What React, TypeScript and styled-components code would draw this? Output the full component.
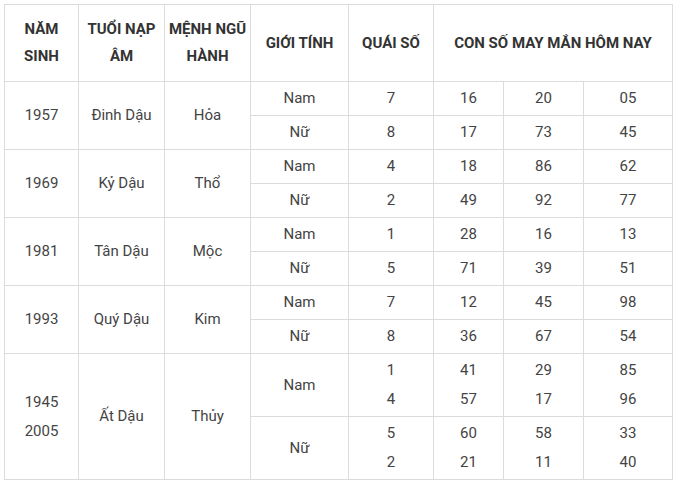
import React from "react";
import styled, { createGlobalStyle } from "styled-components";

const Global = createGlobalStyle`
  html, body { margin: 0; padding: 0; background: #fff; }
  body { font-family: Roboto, "Noto Sans", "Liberation Sans", sans-serif; }
`;

const Wrap = styled.div`
  padding: 4px 0 0 4px;
`;

const Table = styled.table`
  border-collapse: collapse;
  table-layout: fixed;
  width: 668px;
  font-size: 15px;
  color: #444;
`;

const Th = styled.th`
  border: 1px solid #dcdcdc;
  font-weight: 700;
  color: #333;
  line-height: 27px;
  height: 76px;
  padding: 0;
  white-space: nowrap;
  text-align: center;
  vertical-align: middle;
`;

const Td = styled.td<{ $h?: number }>`
  border: 1px solid #dcdcdc;
  text-align: center;
  vertical-align: middle;
  padding: 0;
  line-height: 29px;
  height: ${(p) => (p.$h ? `${p.$h}px` : "auto")};
`;

const Line = styled.div`
  line-height: 29px;
`;

type Sub = { g: string; q: string[]; n: string[][] };
type Group = { year: string[]; tuoi: string; menh: string; subs: Sub[]; h: number };

const data: Group[] = [
  { year: ["1957"], tuoi: "Đinh Dậu", menh: "Hỏa", h: 33, subs: [
    { g: "Nam", q: ["7"], n: [["16", "20", "05"]] },
    { g: "Nữ", q: ["8"], n: [["17", "73", "45"]] },
  ] },
  { year: ["1969"], tuoi: "Kỷ Dậu", menh: "Thổ", h: 33, subs: [
    { g: "Nam", q: ["4"], n: [["18", "86", "62"]] },
    { g: "Nữ", q: ["2"], n: [["49", "92", "77"]] },
  ] },
  { year: ["1981"], tuoi: "Tân Dậu", menh: "Mộc", h: 33, subs: [
    { g: "Nam", q: ["1"], n: [["28", "16", "13"]] },
    { g: "Nữ", q: ["5"], n: [["71", "39", "51"]] },
  ] },
  { year: ["1993"], tuoi: "Quý Dậu", menh: "Kim", h: 33, subs: [
    { g: "Nam", q: ["7"], n: [["12", "45", "98"]] },
    { g: "Nữ", q: ["8"], n: [["36", "67", "54"]] },
  ] },
  { year: ["1945", "2005"], tuoi: "Ất Dậu", menh: "Thủy", h: 62, subs: [
    { g: "Nam", q: ["1", "4"], n: [["41", "29", "85"], ["57", "17", "96"]] },
    { g: "Nữ", q: ["5", "2"], n: [["60", "58", "33"], ["21", "11", "40"]] },
  ] },
];

const widths = [74, 86, 86, 98, 85, 70, 80, 89];

const Lines = ({ items }: { items: string[] }) => (
  <>{items.map((t, i) => <Line key={i}>{t}</Line>)}</>
);

export default function App() {
  return (
    <>
      <Global />
      <Wrap>
        <Table>
          <colgroup>
            {widths.map((w, i) => <col key={i} style={{ width: w }} />)}
          </colgroup>
          <thead>
            <tr>
              <Th>NĂM<br />SINH</Th>
              <Th>TUỔI NẠP<br />ÂM</Th>
              <Th>MỆNH NGŨ<br />HÀNH</Th>
              <Th>GIỚI TÍNH</Th>
              <Th>QUÁI SỐ</Th>
              <Th colSpan={3}>CON SỐ MAY MẮN HÔM NAY</Th>
            </tr>
          </thead>
          <tbody>
            {data.map((g) =>
              g.subs.map((s, si) => (
                <tr key={g.year[0] + si}>
                  {si === 0 && (
                    <>
                      <Td rowSpan={2}><Lines items={g.year} /></Td>
                      <Td rowSpan={2}>{g.tuoi}</Td>
                      <Td rowSpan={2}>{g.menh}</Td>
                    </>
                  )}
                  <Td $h={g.h}>{s.g}</Td>
                  <Td><Lines items={s.q} /></Td>
                  {[0, 1, 2].map((c) => (
                    <Td key={c}><Lines items={s.n.map((r) => r[c])} /></Td>
                  ))}
                </tr>
              ))
            )}
          </tbody>
        </Table>
      </Wrap>
    </>
  );
}
